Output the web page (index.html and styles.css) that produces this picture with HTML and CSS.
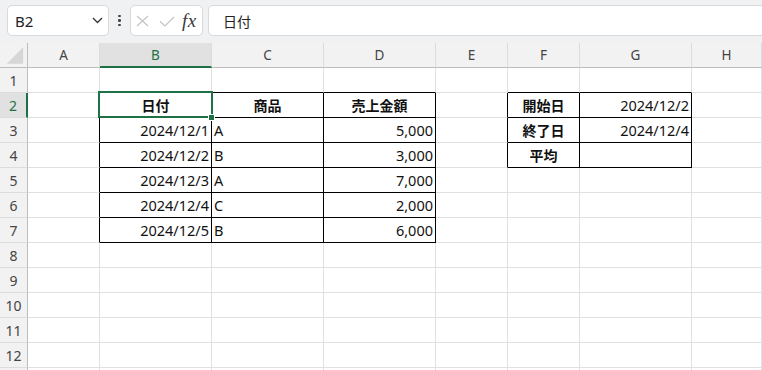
FILE: index.html
```html
<!DOCTYPE html>
<html lang="ja">
<head>
<meta charset="utf-8">
<title>Sheet</title>
<link rel="stylesheet" href="styles.css">
</head>
<body>
<div class="toolbar">
  <div class="namebox">
    <span class="ref">B2</span>
    <svg class="chev" width="11" height="7" viewBox="0 0 11 7"><polyline points="1,1 5.5,5.5 10,1" fill="none" stroke="#333" stroke-width="1.3"/></svg>
  </div>
  <div class="dots"><i></i><i></i><i></i></div>
  <div class="fxbox">
    <svg class="ico-x" width="13" height="12" viewBox="0 0 13 12"><path d="M1 1 L12 11 M12 1 L1 11" stroke="#c4c4c4" stroke-width="1.2" fill="none"/></svg>
    <svg class="ico-ok" width="16" height="11" viewBox="0 0 16 11"><polyline points="1,5.5 6,10 15,1" fill="none" stroke="#c4c4c4" stroke-width="1.2"/></svg>
    <span class="fx">fx</span>
  </div>
  <div class="formula">日付</div>
</div>

<div class="sheet">
  <!-- header row -->
  <div class="c corner"><svg width="28" height="25" viewBox="0 0 28 25"><polygon points="24,4 24,21 7,21" fill="#d6d6d6"/></svg></div>
  <div class="c ch">A</div>
  <div class="c ch selh">B</div>
  <div class="c ch">C</div>
  <div class="c ch">D</div>
  <div class="c ch">E</div>
  <div class="c ch">F</div>
  <div class="c ch">G</div>
  <div class="c ch">H</div>

  <!-- row 1 -->
  <div class="c rh">1</div>
  <div class="c"></div>
  <div class="c kb"></div>
  <div class="c kb"></div>
  <div class="c kb"></div>
  <div class="c"></div>
  <div class="c kb"></div>
  <div class="c kb"></div>
  <div class="c"></div>

  <!-- row 2 -->
  <div class="c rh selr">2</div>
  <div class="c kr"></div>
  <div class="c kr kb hd active">日付<span class="selbox"></span><span class="handle"></span></div>
  <div class="c kr kb hd">商品</div>
  <div class="c kr kb hd">売上金額</div>
  <div class="c kr"></div>
  <div class="c kr kb hd">開始日</div>
  <div class="c kr kb num">2024/12/2</div>
  <div class="c"></div>

  <!-- row 3 -->
  <div class="c rh">3</div>
  <div class="c kr"></div>
  <div class="c kr kb num">2024/12/1</div>
  <div class="c kr kb">A</div>
  <div class="c kr kb num">5,000</div>
  <div class="c kr"></div>
  <div class="c kr kb hd">終了日</div>
  <div class="c kr kb num">2024/12/4</div>
  <div class="c"></div>

  <!-- row 4 -->
  <div class="c rh">4</div>
  <div class="c kr"></div>
  <div class="c kr kb num">2024/12/2</div>
  <div class="c kr kb">B</div>
  <div class="c kr kb num">3,000</div>
  <div class="c kr"></div>
  <div class="c kr kb hd">平均</div>
  <div class="c kr kb num"></div>
  <div class="c"></div>

  <!-- row 5 -->
  <div class="c rh">5</div>
  <div class="c kr"></div>
  <div class="c kr kb num">2024/12/3</div>
  <div class="c kr kb">A</div>
  <div class="c kr kb num">7,000</div>
  <div class="c"></div>
  <div class="c"></div>
  <div class="c"></div>
  <div class="c"></div>

  <!-- row 6 -->
  <div class="c rh">6</div>
  <div class="c kr"></div>
  <div class="c kr kb num">2024/12/4</div>
  <div class="c kr kb">C</div>
  <div class="c kr kb num">2,000</div>
  <div class="c"></div>
  <div class="c"></div>
  <div class="c"></div>
  <div class="c"></div>

  <!-- row 7 -->
  <div class="c rh">7</div>
  <div class="c kr"></div>
  <div class="c kr kb num">2024/12/5</div>
  <div class="c kr kb">B</div>
  <div class="c kr kb num">6,000</div>
  <div class="c"></div>
  <div class="c"></div>
  <div class="c"></div>
  <div class="c"></div>

  <!-- rows 8-13 -->
  <div class="c rh">8</div>
  <div class="c"></div><div class="c"></div><div class="c"></div><div class="c"></div><div class="c"></div><div class="c"></div><div class="c"></div><div class="c"></div>
  <div class="c rh">9</div>
  <div class="c"></div><div class="c"></div><div class="c"></div><div class="c"></div><div class="c"></div><div class="c"></div><div class="c"></div><div class="c"></div>
  <div class="c rh">10</div>
  <div class="c"></div><div class="c"></div><div class="c"></div><div class="c"></div><div class="c"></div><div class="c"></div><div class="c"></div><div class="c"></div>
  <div class="c rh">11</div>
  <div class="c"></div><div class="c"></div><div class="c"></div><div class="c"></div><div class="c"></div><div class="c"></div><div class="c"></div><div class="c"></div>
  <div class="c rh">12</div>
  <div class="c"></div><div class="c"></div><div class="c"></div><div class="c"></div><div class="c"></div><div class="c"></div><div class="c"></div><div class="c"></div>
  <div class="c rh"></div>
  <div class="c"></div><div class="c"></div><div class="c"></div><div class="c"></div><div class="c"></div><div class="c"></div><div class="c"></div><div class="c"></div>
</div>
</body>
</html>
```

FILE: styles.css
```css
* { box-sizing: border-box; }

html, body {
  margin: 0;
  padding: 0;
  width: 762px;
  height: 370px;
  overflow: hidden;
  background: #ffffff;
  font-family: "Noto Sans", "Noto Sans CJK JP", sans-serif;
}

/* ---------- formula bar ---------- */
.toolbar {
  height: 43px;
  background: #f0f1f3;
  display: flex;
  align-items: flex-start;
  padding: 5px 0 0 7px;
  overflow: hidden;
}

.namebox {
  width: 102px;
  height: 31px;
  background: #fff;
  border: 1px solid #d9d9d9;
  border-radius: 5px;
  display: flex;
  align-items: center;
  padding: 0 5px 0 7px;
}

.ref {
  font-size: 15px;
  color: #222;
  font-family: "Noto Sans", sans-serif;
}

.chev { margin-left: auto; }

.dots {
  width: 3px;
  height: 31px;
  margin-left: 9px;
  display: flex;
  flex-direction: column;
  justify-content: center;
  align-items: center;
  gap: 2px;
}

.dots i {
  display: block;
  width: 2.5px;
  height: 2.5px;
  border-radius: 50%;
  background: #444;
}

.fxbox {
  width: 73px;
  height: 31px;
  margin-left: 9px;
  background: #fff;
  border: 1px solid #d9d9d9;
  border-radius: 5px;
  display: flex;
  align-items: center;
  padding-left: 5px;
}

.ico-x { margin-top: 1px; }
.ico-ok { margin-left: 10px; margin-top: 1px; }

.fx {
  margin-left: 7px;
  font-family: "Liberation Serif", serif;
  font-style: italic;
  font-weight: 400;
  font-size: 19px;
  letter-spacing: 0.5px;
  color: #3a3a3a;
  line-height: 1;
}

.formula {
  flex: 1;
  height: 31px;
  margin-left: 5px;
  margin-right: -10px;
  background: #fff;
  border: 1px solid #d9d9d9;
  border-radius: 5px;
  display: flex;
  align-items: center;
  padding-left: 14px;
  font-size: 14px;
  color: #222;
  font-family: "Noto Sans CJK JP", sans-serif;
}

/* ---------- grid ---------- */
.sheet {
  display: grid;
  grid-template-columns: 28px 72px 112px 112px 112px 72px 72px 112px 70px;
  grid-template-rows: repeat(14, 25px);
  height: 327px;
  overflow: hidden;
}

.c {
  border-right: 1px solid #e0e0e0;
  border-bottom: 1px solid #e0e0e0;
  display: flex;
  align-items: center;
  padding: 0 2px 0 2px;
  font-size: 14.5px;
  color: #111;
  white-space: nowrap;
  overflow: visible;
}

.ch {
  background: #f2f2f2;
  border-bottom-color: #bdbdbd;
  border-right-color: #dcdcdc;
  justify-content: center;
  font-size: 13.5px;
  color: #444;
}

.rh {
  background: #f2f2f2;
  border-right-color: #bdbdbd;
  border-bottom-color: #dcdcdc;
  justify-content: center;
  font-size: 14px;
  color: #444;
  padding: 0;
}

.corner {
  background: #f2f2f2;
  border-right-color: #bdbdbd;
  border-bottom-color: #bdbdbd;
  padding: 0;
}

.corner svg { display: block; }

.selh {
  background: #e1e1e1;
  color: #1e7145;
  border-bottom: 2px solid #1e7145;
}

.selr {
  background: #e1e1e1;
  color: #1e7145;
  border-right: 2px solid #1e7145;
}

.kb { border-bottom-color: #000; }
.kr { border-right-color: #000; }

.hd {
  justify-content: center;
  font-size: 14px;
  font-weight: 700;
  font-family: "Noto Sans CJK JP", sans-serif;
}

.num { justify-content: flex-end; }

.active { position: relative; }

.selbox {
  position: absolute;
  left: -2px;
  top: -2px;
  width: 115px;
  height: 27px;
  border: 2px solid #1e7145;
  z-index: 2;
}

.handle {
  position: absolute;
  left: 108px;
  top: 21px;
  width: 7px;
  height: 7px;
  background: #1e7145;
  border: 1px solid #fff;
  z-index: 3;
}
```
